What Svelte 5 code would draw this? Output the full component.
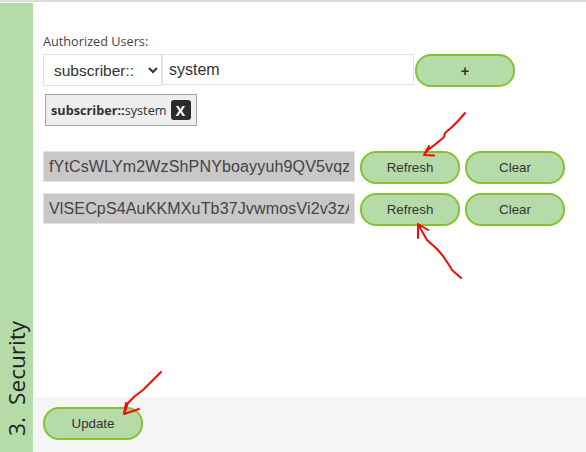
<script>
	let prefix = $state("subscriber::");
	let user = $state("system");
	let tokens = $state([
		"fYtCsWLYm2WzShPNYboayyuh9QV5vqz  ",
		"VlSECpS4AuKKMXuTb37JvwmosVi2v3zAxYz2"
	]);
</script>

<div class="page">
	<aside class="side">
		<h2><span>3.</span><span>Security</span></h2>
	</aside>
	<main>
		<section class="body">
			<label for="user">Authorized Users:</label>
			<div class="add-row">
				<select bind:value={prefix}>
					<option>subscriber::</option>
				</select>
				<input id="user" class="user" bind:value={user} />
				<button class="btn plus">+</button>
			</div>
			<div class="tag">
				<b>subscriber::</b>system<span class="x">X</span>
			</div>
			<div class="tokens">
				{#each tokens as token}
					<div class="token-row">
						<input class="token" readonly value={token} />
						<button class="btn">Refresh</button>
						<button class="btn">Clear</button>
					</div>
				{/each}
			</div>
		</section>
		<footer>
			<button class="btn">Update</button>
		</footer>
	</main>
	<svg class="marks" width="586" height="452" viewBox="0 0 586 452" aria-hidden="true">
		<path d="M465 113 L458 121 L452 127 L445 133 L444 137 L437 143 L428 150 L424 155 M429 146 L424 155 L434 155.5" />
		<path d="M461 278 L452 270 L449 265 L443 256 L437 249 L427 240 L423 233 L418 224 M418 238 L418 224 L428 230" />
		<path d="M161 372 L153 380 L143 390 L135 396 L128 403 L124 414 M126 403 L124 414 L139 409" />
	</svg>
</div>

<style>
	:global(body) {
		margin: 0;
		background: #fff;
	}

	.page {
		position: relative;
		display: flex;
		width: 586px;
		height: 452px;
		box-sizing: border-box;
		padding-top: 1px;
		border-top: 2px solid #dcdcdc;
		overflow: hidden;
		font-family: "Liberation Sans", Arial, sans-serif;
		color: #333;
	}

	.side {
		flex: 0 0 33px;
		display: flex;
		align-items: flex-end;
		background: #b5dba9;
	}

	h2 {
		display: flex;
		gap: 12px;
		margin: 0 0 16px 0;
		writing-mode: vertical-rl;
		transform: rotate(180deg);
		font: 400 22.6px/33px "Open Sans", sans-serif;
		color: #222;
	}

	main {
		flex: 1;
		display: flex;
		flex-direction: column;
		min-width: 0;
	}

	.body {
		flex: 1;
		padding: 29px 0 0 10px;
	}

	label {
		display: block;
		height: 22px;
		font: 12.7px/18px "Open Sans", sans-serif;
		color: #444;
	}

	.add-row {
		display: flex;
		align-items: flex-start;
	}

	select {
		width: 119px;
		height: 32px;
		box-sizing: border-box;
		padding-left: 6px;
		border: 1px solid #e2e2e2;
		background: #fff;
		font: 15.5px "Liberation Sans", Arial, sans-serif;
		color: #333;
	}

	.user {
		width: 252px;
		height: 31px;
		box-sizing: border-box;
		padding: 0 6px;
		border: 1px solid #e2e2e2;
		font: 16px "Liberation Sans", Arial, sans-serif;
		color: #333;
	}

	.btn {
		flex: 0 0 100px;
		width: 100px;
		height: 33px;
		box-sizing: border-box;
		padding: 0;
		border: 2px solid #83c332;
		border-radius: 16px;
		background: #b5dba9;
		font: 13.33px "Liberation Sans", Arial, sans-serif;
		color: #333;
	}

	.plus {
		margin-left: 1px;
		font-weight: 700;
		font-size: 14.5px;
	}

	.tag {
		display: inline-flex;
		align-items: center;
		height: 32px;
		box-sizing: border-box;
		margin: 7px 0 0 2px;
		padding: 0 5px;
		border: 1px solid #a6a6a6;
		background: #eee;
		font: 12.7px "Open Sans", sans-serif;
	}

	.tag b {
		font-weight: 700;
	}

	.x {
		display: inline-flex;
		align-items: center;
		justify-content: center;
		width: 20px;
		height: 20px;
		margin-left: 4px;
		border-radius: 3px;
		background: #2b2b2b;
		color: #fff;
		font-weight: 700;
		font-size: 14px;
	}

	.tokens {
		display: flex;
		flex-direction: column;
		gap: 11px;
		margin-top: 25px;
	}

	.token-row {
		display: flex;
		align-items: flex-start;
		gap: 5px;
		height: 31px;
	}

	.token {
		width: 312px;
		height: 31px;
		box-sizing: border-box;
		padding: 0 5px;
		border: 1px solid #e2e2e2;
		background: #c8c8c8;
		font: 16px "Liberation Sans", Arial, sans-serif;
		letter-spacing: 0.15px;
		color: #444;
	}

	footer {
		flex: 0 0 55px;
		box-sizing: border-box;
		padding: 10px 0 0 10px;
		background: #f5f5f5;
	}

	.marks {
		position: absolute;
		left: 0;
		top: -2px;
		pointer-events: none;
	}

	.marks path {
		fill: none;
		stroke: #f80808;
		stroke-width: 2;
		stroke-linejoin: round;
		stroke-linecap: round;
	}
</style>
